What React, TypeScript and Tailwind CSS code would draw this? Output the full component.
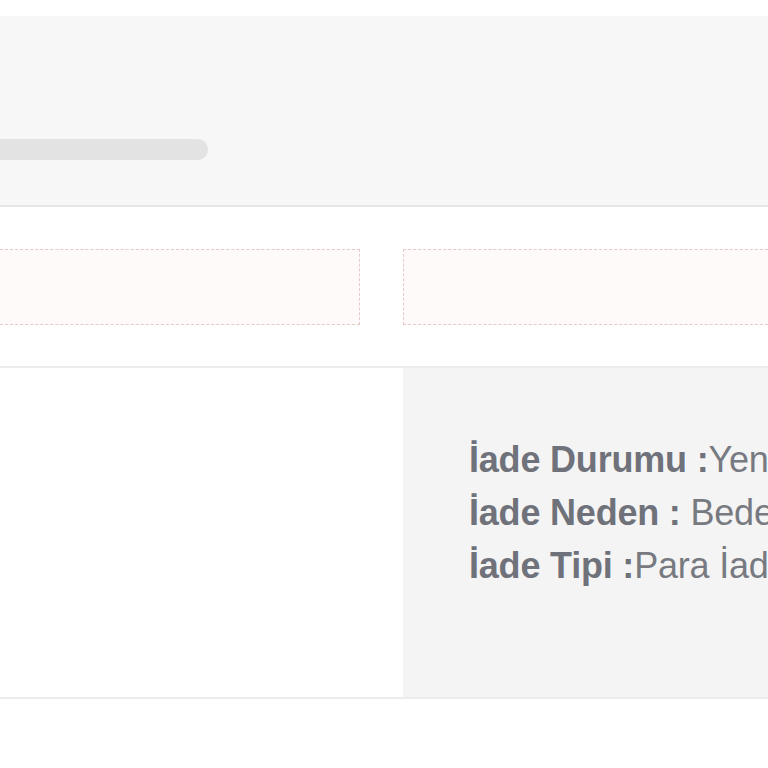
import React from "react";

export default function App() {
  return (
    <div className="w-[768px] h-[768px] overflow-hidden bg-white" style={{ fontFamily: '"Liberation Sans", Arial, sans-serif' }}>
      <div className="h-[16px]" />
      <div className="h-[191px] bg-[#f7f7f7] border-b-2 border-[#e6e6e6] flex flex-col">
        <div className="h-[123px]" />
        <div className="w-[208px] h-[21px] bg-[#e3e3e3] rounded-r-full" />
      </div>
      <div className="h-[161px] flex items-start pt-[42px] gap-[43px] border-b-2 border-[#ececec]">
        <div className="w-[360px] h-[76px] shrink-0 bg-[#fffafa] border border-dashed border-[#e6caca] border-l-0" />
        <div className="flex-1 h-[76px] bg-[#fffafa] border border-dashed border-[#e6caca] border-r-0" />
      </div>
      <div className="h-[331px] flex border-b-2 border-[#ececec]">
        <div className="w-[403px] shrink-0 bg-white" />
        <div className="flex-1 bg-[#f4f4f4] pl-[66px] pt-[65px] overflow-hidden text-[36px] leading-[53px] text-[#777a80] whitespace-nowrap tracking-[-0.2px]">
          <div><span className="font-bold text-[#6f727a]">İade Durumu :</span>Yeni</div>
          <div><span className="font-bold text-[#6f727a]">İade Neden : </span>Beden uymadı</div>
          <div><span className="font-bold text-[#6f727a]">İade Tipi :</span>Para İadesi</div>
        </div>
      </div>
    </div>
  );
}
